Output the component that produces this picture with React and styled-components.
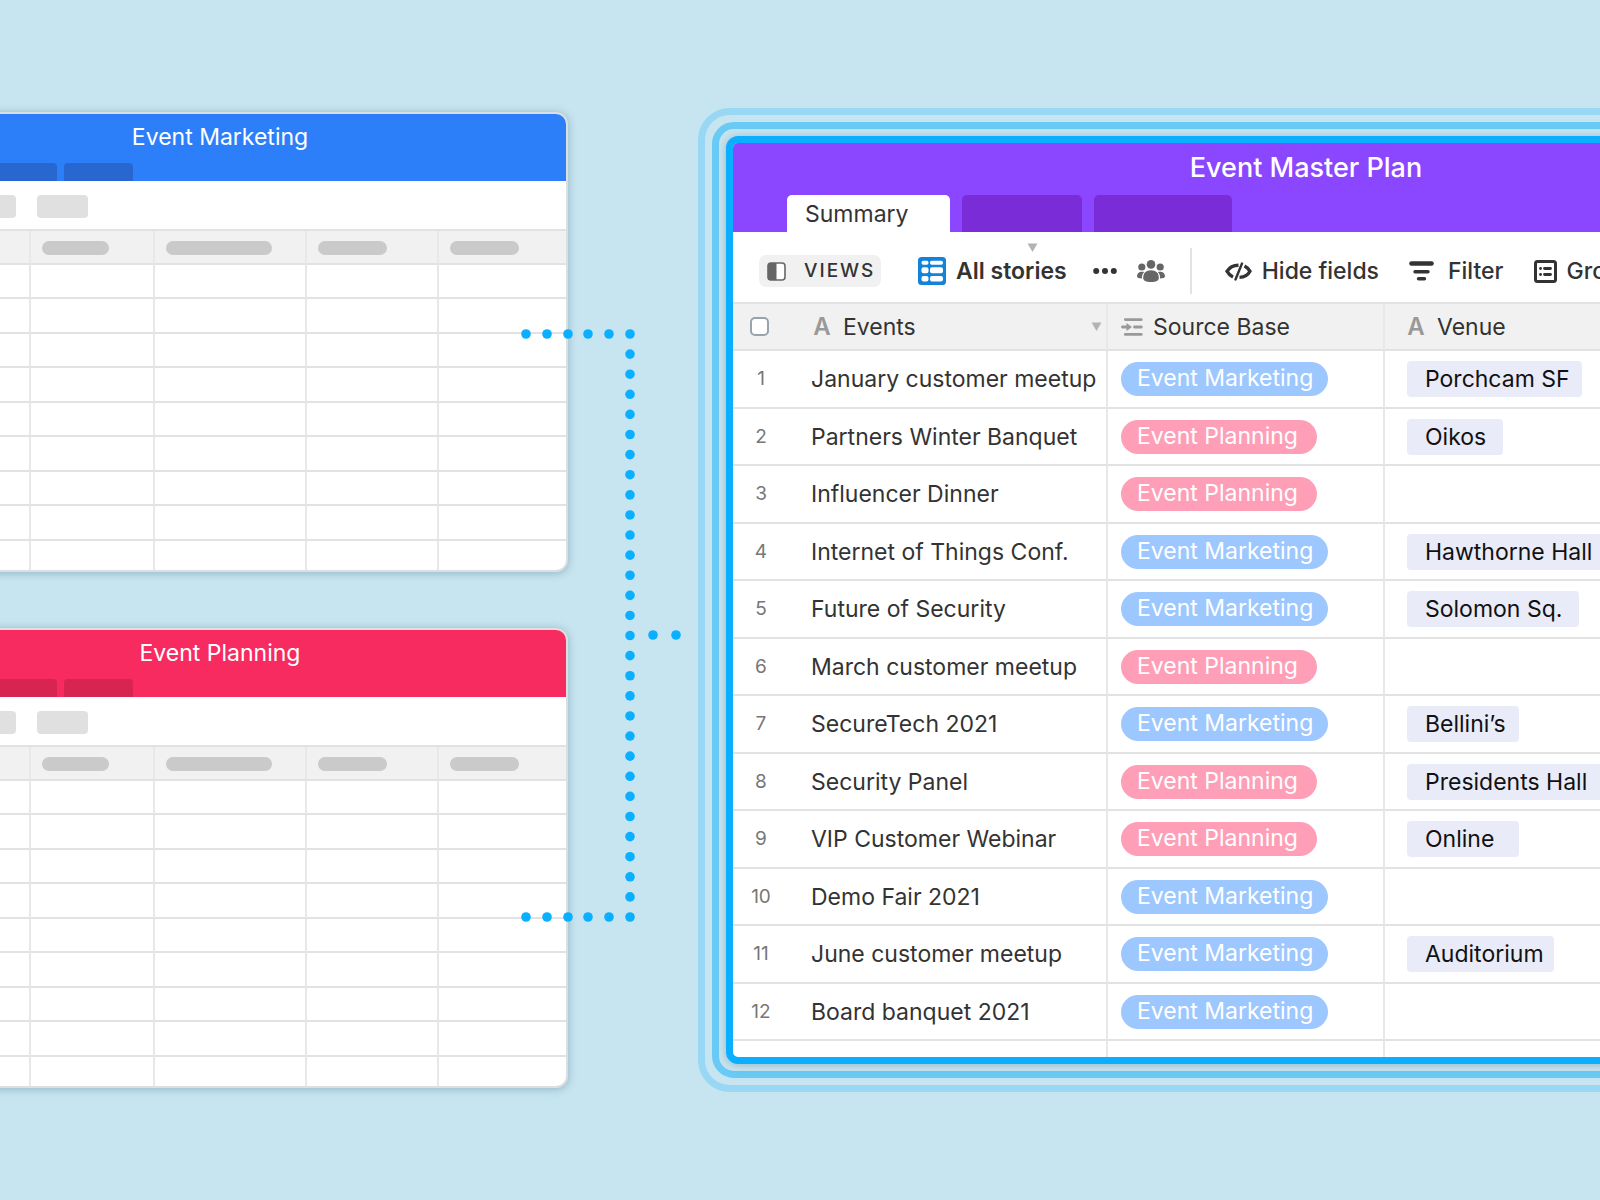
import React from "react";
import styled, { createGlobalStyle } from "styled-components";

const line = "#e2e2e2";
const accent = "#0ab0ff";

const GlobalStyle = createGlobalStyle`
  *, *::before, *::after {
    box-sizing: border-box;
  }

  body {
    margin: 0;
    background: #c7e5f0;
    color: #333;
    font-family: Inter, "Liberation Sans", sans-serif;
    font-size: 23px;
    line-height: 28px;
  }

  button {
    margin: 0;
    padding: 0;
    border: 0;
    background: none;
    color: inherit;
    font: inherit;
    cursor: pointer;
  }

  h1, h2 {
    margin: 0;
    font-weight: 500;
  }
`;

const Page = styled.main`
  display: grid;
  grid-template-columns: 71fr 16fr 113fr;
  align-items: start;
  min-height: 100vh;
  overflow: hidden;
`;

const Sources = styled.div`
  display: flex;
  flex-direction: column;
  gap: 56px;
  margin-left: -128px;
  padding: 112px 0;
`;

const Card = styled.section`
  border: 2px solid #dcdfe1;
  border-radius: 12px;
  background: #fff;
  box-shadow: 0 1px 8px rgba(40, 80, 110, 0.35);
  overflow: hidden;
`;

const CardHeader = styled.header`
  display: flex;
  flex-direction: column;
  justify-content: space-between;
  height: 67px;
  background: ${(p) => p.$color};
  color: #fff;
  text-align: center;

  h2 {
    padding-top: 9px;
    font-size: 23px;
    font-weight: 400;
  }
`;

const CardTabs = styled.div`
  display: flex;
  gap: 7px;
  padding-left: 83px;
`;

const CardTab = styled.span`
  width: ${(p) => p.$width}px;
  height: 18px;
  border-radius: 4px 4px 0 0;
  background: ${(p) => p.$color};
`;

const CardTools = styled.div`
  display: flex;
  gap: 21px;
  height: 50px;
  padding: 14px 0 0 91px;
  border-bottom: 2px solid ${line};
`;

const ToolBlock = styled.span`
  width: 51px;
  height: 23px;
  border-radius: 4px;
  background: #e0e0e0;
`;

const CardTable = styled.table`
  width: 100%;
  table-layout: fixed;
  border-spacing: 0;

  th,
  td {
    height: 34px;
    padding: 0 0 0 11px;
    border-right: 2px solid #e8e8e8;
    border-bottom: 2px solid ${line};
  }

  th {
    padding-top: 2px;
    background: #f1f1f1;
  }

  tr:nth-child(even) td {
    height: 35px;
  }

  th:last-child,
  td:last-child {
    border-right: 0;
  }

  tr:last-child td {
    height: 29px;
    border-bottom: 0;
  }
`;

const HeadBlock = styled.span`
  display: block;
  width: ${(p) => p.$width}px;
  height: 14px;
  border-radius: 7px;
  background: #cacaca;
`;

const Connector = styled.svg`
  z-index: 1;
  width: 175px;
  height: 600px;
  margin: 326px 0 0 -47px;
  fill: ${accent};
`;

const Ring = styled.div`
  padding: 7px;
  border: 7px solid ${(p) => p.$color};
  border-radius: ${(p) => p.$radius}px;
`;

const OuterRing = styled(Ring)`
  margin: 108px -314px 0 2px;
`;

const Master = styled.section`
  border: 7px solid ${accent};
  border-radius: 12px;
  background: #fff;
  box-shadow: 0 1px 8px rgba(40, 80, 110, 0.3);
  overflow: hidden;
`;

const MasterHeader = styled.header`
  display: flex;
  flex-direction: column;
  justify-content: space-between;
  height: 89px;
  background: #8b46ff;

  h1 {
    padding-top: 9px;
    color: #fff;
    font-size: 27px;
    line-height: 32px;
    text-align: center;
  }
`;

const Tabs = styled.nav`
  display: flex;
  gap: 12px;
  padding-left: 54px;
`;

const Tab = styled.button`
  width: ${(p) => p.$width}px;
  height: 37px;
  padding-left: 18px;
  border-radius: 5px 5px 0 0;
  background: ${(p) => (p.$active ? "#fff" : "#7a2dd6")};
  text-align: left;
`;

const Toolbar = styled.div`
  display: flex;
  align-items: center;
  height: 72px;
  padding: 8px 0 0 26px;
  border-bottom: 2px solid ${line};
  white-space: nowrap;
`;

const ViewsButton = styled.button`
  display: flex;
  align-items: center;
  gap: 18px;
  width: 122px;
  height: 32px;
  padding-left: 8px;
  border-radius: 7px;
  background: #f1f1f1;
  font-size: 19px;
  font-weight: 500;
  letter-spacing: 2px;
`;

const ViewName = styled.button`
  position: relative;
  display: flex;
  align-items: center;
  gap: 10px;
  margin: 0 26px 0 37px;
  font-weight: 600;
`;

const ViewCaret = styled.span`
  position: absolute;
  top: -14px;
  right: 29px;
  display: flex;
`;

const IconButton = styled.button`
  display: flex;
  margin-right: 20px;
`;

const Divider = styled.span`
  width: 2px;
  height: 46px;
  margin: 0 33px 0 5px;
  background: #e2e2e2;
`;

const ToolButton = styled.button`
  display: flex;
  align-items: center;
  gap: 10px;
  margin-right: 30px;
  font-weight: 500;
`;

const Grid = styled.table`
  width: 100%;
  table-layout: fixed;
  border-spacing: 0;
  white-space: nowrap;

  th,
  td {
    height: 57px;
    padding: 0 0 0 22px;
    border-right: 2px solid #e8e8e8;
    border-bottom: 2px solid ${line};
    text-align: left;
  }

  th {
    height: 47px;
    background: #f1f1f1;
    font-weight: 400;
  }

  tr:nth-child(odd) td {
    height: 58px;
  }

  th:first-child,
  td:first-child {
    padding: 0;
    border-right: 0;
    color: #777;
    font-size: 19px;
    text-align: center;
  }

  th:nth-child(3),
  td:nth-child(3) {
    padding-left: 13px;
  }

  th:last-child {
    padding-left: 20px;
  }

  tbody tr:last-child td {
    height: 16px;
    border-bottom: 0;
  }
`;

const Checkbox = styled.input`
  appearance: none;
  display: block;
  width: 19px;
  height: 19px;
  margin: 0 0 0 17px;
  border: 2px solid #9aa3ab;
  border-radius: 5px;
  background: #fff;
`;

const Heading = styled.span`
  display: flex;
  align-items: center;
  gap: 10px;
`;

const SortMark = styled.span`
  display: flex;
  margin: 0 4px 0 auto;
`;

const TypeMark = styled.span`
  width: 22px;
  color: #999;
  font-size: 24px;
  font-weight: 600;
  text-align: center;
`;

const Pill = styled.span`
  display: flex;
  align-items: center;
  width: ${(p) => (p.$kind === "marketing" ? 207 : 196)}px;
  height: 34px;
  padding: 0 0 2px 16px;
  border-radius: 17px;
  background: ${(p) => (p.$kind === "marketing" ? "#9cc7ff" : "#ff9eb7")};
  color: #fff;
`;

const Chip = styled.span`
  display: flex;
  align-items: center;
  width: ${(p) => p.$width}px;
  height: 36px;
  padding-left: 18px;
  border-radius: 4px;
  background: #e9ebf8;
  color: #111;
`;

const cardColumns = [
  { width: 157 },
  { width: 124, block: 67 },
  { width: 152, block: 106 },
  { width: 132, block: 69 },
  { block: 69 },
];

const events = [
  { name: "January customer meetup", kind: "marketing", venue: "Porchcam SF", width: 175 },
  { name: "Partners Winter Banquet", kind: "planning", venue: "Oikos", width: 96 },
  { name: "Influencer Dinner", kind: "planning" },
  { name: "Internet of Things Conf.", kind: "marketing", venue: "Hawthorne Hall", width: 206 },
  { name: "Future of Security", kind: "marketing", venue: "Solomon Sq.", width: 172 },
  { name: "March customer meetup", kind: "planning" },
  { name: "SecureTech 2021", kind: "marketing", venue: "Bellini’s", width: 112 },
  { name: "Security Panel", kind: "planning", venue: "Presidents Hall", width: 206 },
  { name: "VIP Customer Webinar", kind: "planning", venue: "Online", width: 112 },
  { name: "Demo Fair 2021", kind: "marketing" },
  { name: "June customer meetup", kind: "marketing", venue: "Auditorium", width: 147 },
  { name: "Board banquet 2021", kind: "marketing" },
];

const labels = { marketing: "Event Marketing", planning: "Event Planning" };

// two arms, the spine that joins them, and the stub towards the master base
const dots = [
  ...[5, 26, 47, 67, 88].flatMap((x) => [
    [x, 8],
    [x, 591],
  ]),
  ...Array.from({ length: 30 }, (_, i) => [109, 8 + (i * 583) / 29]),
  [132, 309],
  [155, 309],
];

function Caret() {
  return (
    <svg width="11" height="9" viewBox="0 0 11 9" fill="#b3b3b3">
      <path d="M0.5 0.5h10L5.5 9z" />
    </svg>
  );
}

function PanelIcon() {
  return (
    <svg width="19" height="19" viewBox="0 0 19 19">
      <rect x="1" y="1" width="17" height="17" rx="3" fill="#fff" stroke="#666" strokeWidth="1.6" />
      <path d="M3.5 1H9.5V18H3.5A2.5 2.5 0 0 1 1 15.5V3.5A2.5 2.5 0 0 1 3.5 1z" fill="#666" />
    </svg>
  );
}

function GridIcon() {
  return (
    <svg width="28" height="28" viewBox="0 0 28 28" fill="#fff">
      <rect width="28" height="28" rx="3.5" fill="#1283da" />
      <rect x="3.5" y="3.7" width="7" height="4" rx="1.8" />
      <rect x="12" y="3.7" width="13" height="4" rx="1.8" />
      <rect x="3.5" y="10.3" width="7" height="6" rx="2" />
      <rect x="12" y="10.3" width="13" height="6" rx="2" />
      <rect x="3.5" y="19" width="7" height="5.5" rx="2" />
      <rect x="12" y="19" width="13" height="5.5" rx="2" />
    </svg>
  );
}

function MoreIcon() {
  return (
    <svg width="24" height="8" viewBox="0 0 24 8" fill="#333">
      <circle cx="3.2" cy="4" r="3" />
      <circle cx="12" cy="4" r="3" />
      <circle cx="20.8" cy="4" r="3" />
    </svg>
  );
}

function PeopleIcon() {
  return (
    <svg width="28" height="22" viewBox="0 0 28 22" fill="#666">
      <circle cx="14" cy="4.4" r="4.3" />
      <circle cx="4.8" cy="7" r="3.6" />
      <circle cx="23.2" cy="7" r="3.6" />
      <path d="M14 10.3c5 0 7.8 2.8 7.8 7.7 0 2.7-2.8 4-7.8 4s-7.8-1.3-7.8-4c0-4.9 2.8-7.7 7.8-7.7z" />
      <path d="M4.8 11.7c1 0 1.7.1 2.3.4-1.8 1.9-2.3 4-2.2 6.5-3-.1-4.9-.7-4.9-2.3 0-2.9 1.8-4.6 4.8-4.6z" />
      <path d="M23.2 11.7c-1 0-1.7.1-2.3.4 1.8 1.9 2.3 4 2.2 6.5 3-.1 4.9-.7 4.9-2.3 0-2.9-1.8-4.6-4.8-4.6z" />
    </svg>
  );
}

function HideIcon() {
  return (
    <svg width="27" height="19" viewBox="0 0 27 19" fill="none" stroke="#333">
      <path d="M13.5 3.2C8.5 3.2 4 6 2 9.3c1.4 2.6 3.6 4.6 6 5.7" strokeWidth="3.4" />
      <path d="M17 1.5L10.5 17.5" strokeWidth="2.4" strokeLinecap="round" />
      <path d="M19.5 4c2.5 1.2 4.3 3 5.5 5.3-2 3.7-6 6-10.5 6.1" strokeWidth="3.4" />
    </svg>
  );
}

function FilterIcon() {
  return (
    <svg width="29" height="20" viewBox="0 0 29 20" stroke="#333" strokeLinecap="round">
      <path d="M2.5 2.5h20" strokeWidth="4.6" />
      <path d="M6 10.7h13" strokeWidth="3.4" />
      <path d="M9.5 17.8h6" strokeWidth="3.4" />
    </svg>
  );
}

function GroupIcon() {
  return (
    <svg width="23" height="23" viewBox="0 0 23 23" fill="none" stroke="#333" strokeLinecap="round">
      <rect x="1.5" y="1.5" width="20" height="20" rx="2" strokeWidth="3" />
      <path d="M10.5 8.5h6M10.5 14.5h6" strokeWidth="2.8" />
      <path d="M6.5 8.5h.1M6.5 14.5h.1" strokeWidth="2.8" />
    </svg>
  );
}

function SourceIcon() {
  return (
    <svg width="22" height="18" viewBox="0 0 22 18" fill="none" stroke="#999" strokeWidth="2.8" strokeLinecap="round">
      <path d="M4.3 1.6h16M13.5 9h6.800M4.300 16.400h16M1.500 9h5" />
      <path d="M5.500 5l5.500 4-5.500 4z" fill="#999" stroke="none" />
    </svg>
  );
}

function SourceCard({ title, color, tabColor }) {
  return (
    <Card>
      <CardHeader $color={color}>
        <h2>{title}</h2>
        <CardTabs>
          <CardTab $width={100} $color={tabColor} />
          <CardTab $width={69} $color={tabColor} />
        </CardTabs>
      </CardHeader>
      <CardTools>
        <ToolBlock />
        <ToolBlock />
      </CardTools>
      <CardTable>
        <colgroup>
          {cardColumns.map((column, i) => (
            <col key={i} width={column.width} />
          ))}
        </colgroup>
        <thead>
          <tr>
            {cardColumns.map((column, i) => (
              <th key={i}>{column.block && <HeadBlock $width={column.block} />}</th>
            ))}
          </tr>
        </thead>
        <tbody>
          {Array.from({ length: 9 }, (_, row) => (
            <tr key={row}>
              {cardColumns.map((_, i) => (
                <td key={i} />
              ))}
            </tr>
          ))}
        </tbody>
      </CardTable>
    </Card>
  );
}

function EventGrid() {
  return (
    <Grid>
      <colgroup>
        <col width="56" />
        <col width="319" />
        <col width="277" />
        <col />
      </colgroup>
      <thead>
        <tr>
          <th>
            <Checkbox type="checkbox" aria-label="Select all events" />
          </th>
          <th>
            <Heading>
              <TypeMark aria-hidden="true">A</TypeMark>
              Events
              <SortMark>
                <Caret />
              </SortMark>
            </Heading>
          </th>
          <th>
            <Heading>
              <SourceIcon />
              Source Base
            </Heading>
          </th>
          <th>
            <Heading>
              <TypeMark aria-hidden="true">A</TypeMark>
              Venue
            </Heading>
          </th>
        </tr>
      </thead>
      <tbody>
        {events.map((event, i) => (
          <tr key={event.name}>
            <td>{i + 1}</td>
            <td>{event.name}</td>
            <td>
              <Pill $kind={event.kind}>{labels[event.kind]}</Pill>
            </td>
            <td>{event.venue && <Chip $width={event.width}>{event.venue}</Chip>}</td>
          </tr>
        ))}
        <tr>
          <td />
          <td />
          <td />
          <td />
        </tr>
      </tbody>
    </Grid>
  );
}

function App() {
  return (
    <>
      <GlobalStyle />
      <Page>
        <Sources>
          <SourceCard title="Event Marketing" color="#2d7ff9" tabColor="#2867d0" />
          <SourceCard title="Event Planning" color="#f82b60" tabColor="#d82450" />
        </Sources>
        <Connector viewBox="0 0 175 600" aria-hidden="true">
          {dots.map(([x, y]) => (
            <circle key={`${x}-${y}`} cx={x} cy={y} r="4.8" />
          ))}
        </Connector>
        <OuterRing $color="#98d8f4" $radius={32}>
          <Ring $color="#69caf6" $radius={22}>
            <Master>
              <MasterHeader>
                <h1>Event Master Plan</h1>
                <Tabs>
                  <Tab $width={163} $active>
                    Summary
                  </Tab>
                  <Tab $width={120} aria-label="Second table" />
                  <Tab $width={138} aria-label="Third table" />
                </Tabs>
              </MasterHeader>
              <Toolbar>
                <ViewsButton>
                  <PanelIcon />
                  VIEWS
                </ViewsButton>
                <ViewName>
                  <GridIcon />
                  All stories
                  <ViewCaret>
                    <Caret />
                  </ViewCaret>
                </ViewName>
                <IconButton aria-label="More">
                  <MoreIcon />
                </IconButton>
                <IconButton aria-label="Collaborators">
                  <PeopleIcon />
                </IconButton>
                <Divider />
                <ToolButton>
                  <HideIcon />
                  Hide fields
                </ToolButton>
                <ToolButton>
                  <FilterIcon />
                  Filter
                </ToolButton>
                <ToolButton>
                  <GroupIcon />
                  Group
                </ToolButton>
              </Toolbar>
              <EventGrid />
            </Master>
          </Ring>
        </OuterRing>
      </Page>
    </>
  );
}

export default App;
